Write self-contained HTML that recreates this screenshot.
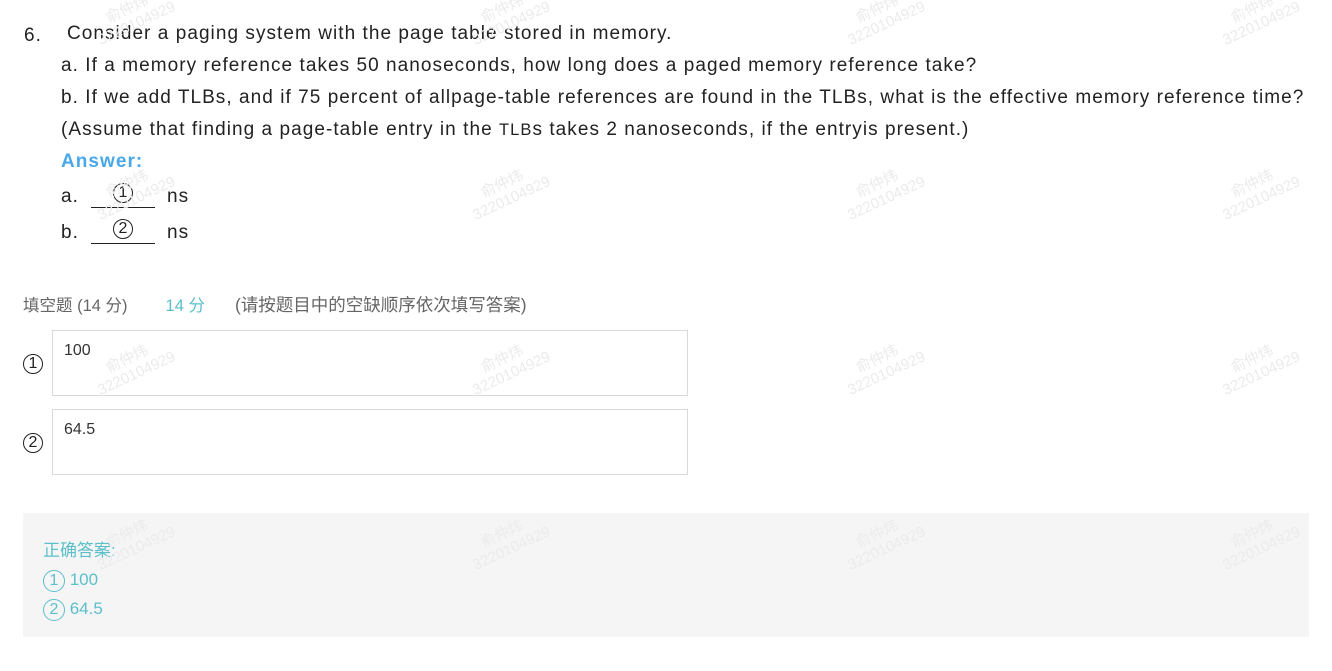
<!DOCTYPE html>
<html><head><meta charset="utf-8"><style>
*{margin:0;padding:0;box-sizing:border-box}
body{width:1332px;height:671px;background:#fff;font-family:"Liberation Sans","Noto Sans CJK SC",sans-serif;color:#222;position:relative;overflow:hidden}
.q{position:absolute;font-size:19px;letter-spacing:1.05px;white-space:nowrap}
.circ{display:inline-block;width:20px;height:20px;border:1.3px solid #222;border-radius:50%;text-align:center;line-height:18px;font-size:16px;letter-spacing:0}
.wm{position:absolute;color:#ebebeb;font-size:15px;line-height:17px;transform:rotate(-25deg);transform-origin:left top;white-space:nowrap;z-index:5}
.box{position:absolute;left:52px;width:636px;height:66px;border:1px solid #d9d9d9;font-size:16px;padding:11px 0 0 11px;color:#333}
.g{color:#5bbfca}
</style></head><body>
<div class="q" style="left:24px;top:25px">6.</div>
<div class="q" style="left:67px;top:23px">Consider a paging system with the page table stored in memory.</div>
<div class="q" style="left:61px;top:55px">a. If a memory reference takes 50 nanoseconds, how long does a paged memory reference take?</div>
<div class="q" style="left:61px;top:87px">b. If we add TLBs, and if 75 percent of allpage-table references are found in the TLBs, what is the effective memory reference time?</div>
<div class="q" style="left:61px;top:119px">(Assume that finding a page-table entry in the <span style="font-size:16.5px">TLB</span>s takes 2 nanoseconds, if the entryis present.)</div>
<div class="q" style="left:61px;top:151px;color:#4aa8e8;font-weight:bold">Answer:</div>
<div class="q" style="left:61px;top:186px">a.</div>
<div style="position:absolute;left:91px;top:183px;width:64px;height:25px;border-bottom:1px solid #222;text-align:center"><span class="circ">1</span></div>
<div class="q" style="left:167px;top:186px">ns</div>
<div class="q" style="left:61px;top:222px">b.</div>
<div style="position:absolute;left:91px;top:219px;width:64px;height:25px;border-bottom:1px solid #222;text-align:center"><span class="circ">2</span></div>
<div class="q" style="left:167px;top:222px">ns</div>

<div style="position:absolute;left:23px;top:292px;font-size:16.5px;color:#666;white-space:nowrap">填空题 (14 分)<span class="g" style="margin-left:38px">14 分</span><span style="margin-left:30px;font-size:17.5px">(请按题目中的空缺顺序依次填写答案)</span></div>
<div style="position:absolute;left:23px;top:354px"><span class="circ">1</span></div>
<div class="box" style="top:330px">100</div>
<div style="position:absolute;left:23px;top:433px"><span class="circ">2</span></div>
<div class="box" style="top:409px">64.5</div>

<div style="position:absolute;left:23px;top:513px;width:1286px;height:124px;background:#f5f5f5"></div>
<div style="position:absolute;left:43px;top:536px;font-size:17px;line-height:29px" class="g">正确答案:<br><span class="circ" style="border-color:#5bbfca;color:#5bbfca;width:22px;height:22px;line-height:20px">1</span> 100<br><span class="circ" style="border-color:#5bbfca;color:#5bbfca;width:22px;height:22px;line-height:20px">2</span> 64.5</div>

<div class="wm" style="left:88px;top:18px">&nbsp;&nbsp;&nbsp;&nbsp;俞仲炜<br>3220104929</div>
<div class="wm" style="left:463px;top:18px">&nbsp;&nbsp;&nbsp;&nbsp;俞仲炜<br>3220104929</div>
<div class="wm" style="left:838px;top:18px">&nbsp;&nbsp;&nbsp;&nbsp;俞仲炜<br>3220104929</div>
<div class="wm" style="left:1213px;top:18px">&nbsp;&nbsp;&nbsp;&nbsp;俞仲炜<br>3220104929</div>
<div class="wm" style="left:88px;top:193px">&nbsp;&nbsp;&nbsp;&nbsp;俞仲炜<br>3220104929</div>
<div class="wm" style="left:463px;top:193px">&nbsp;&nbsp;&nbsp;&nbsp;俞仲炜<br>3220104929</div>
<div class="wm" style="left:838px;top:193px">&nbsp;&nbsp;&nbsp;&nbsp;俞仲炜<br>3220104929</div>
<div class="wm" style="left:1213px;top:193px">&nbsp;&nbsp;&nbsp;&nbsp;俞仲炜<br>3220104929</div>
<div class="wm" style="left:88px;top:368px">&nbsp;&nbsp;&nbsp;&nbsp;俞仲炜<br>3220104929</div>
<div class="wm" style="left:463px;top:368px">&nbsp;&nbsp;&nbsp;&nbsp;俞仲炜<br>3220104929</div>
<div class="wm" style="left:838px;top:368px">&nbsp;&nbsp;&nbsp;&nbsp;俞仲炜<br>3220104929</div>
<div class="wm" style="left:1213px;top:368px">&nbsp;&nbsp;&nbsp;&nbsp;俞仲炜<br>3220104929</div>
<div class="wm" style="left:88px;top:543px">&nbsp;&nbsp;&nbsp;&nbsp;俞仲炜<br>3220104929</div>
<div class="wm" style="left:463px;top:543px">&nbsp;&nbsp;&nbsp;&nbsp;俞仲炜<br>3220104929</div>
<div class="wm" style="left:838px;top:543px">&nbsp;&nbsp;&nbsp;&nbsp;俞仲炜<br>3220104929</div>
<div class="wm" style="left:1213px;top:543px">&nbsp;&nbsp;&nbsp;&nbsp;俞仲炜<br>3220104929</div>
</body></html>
